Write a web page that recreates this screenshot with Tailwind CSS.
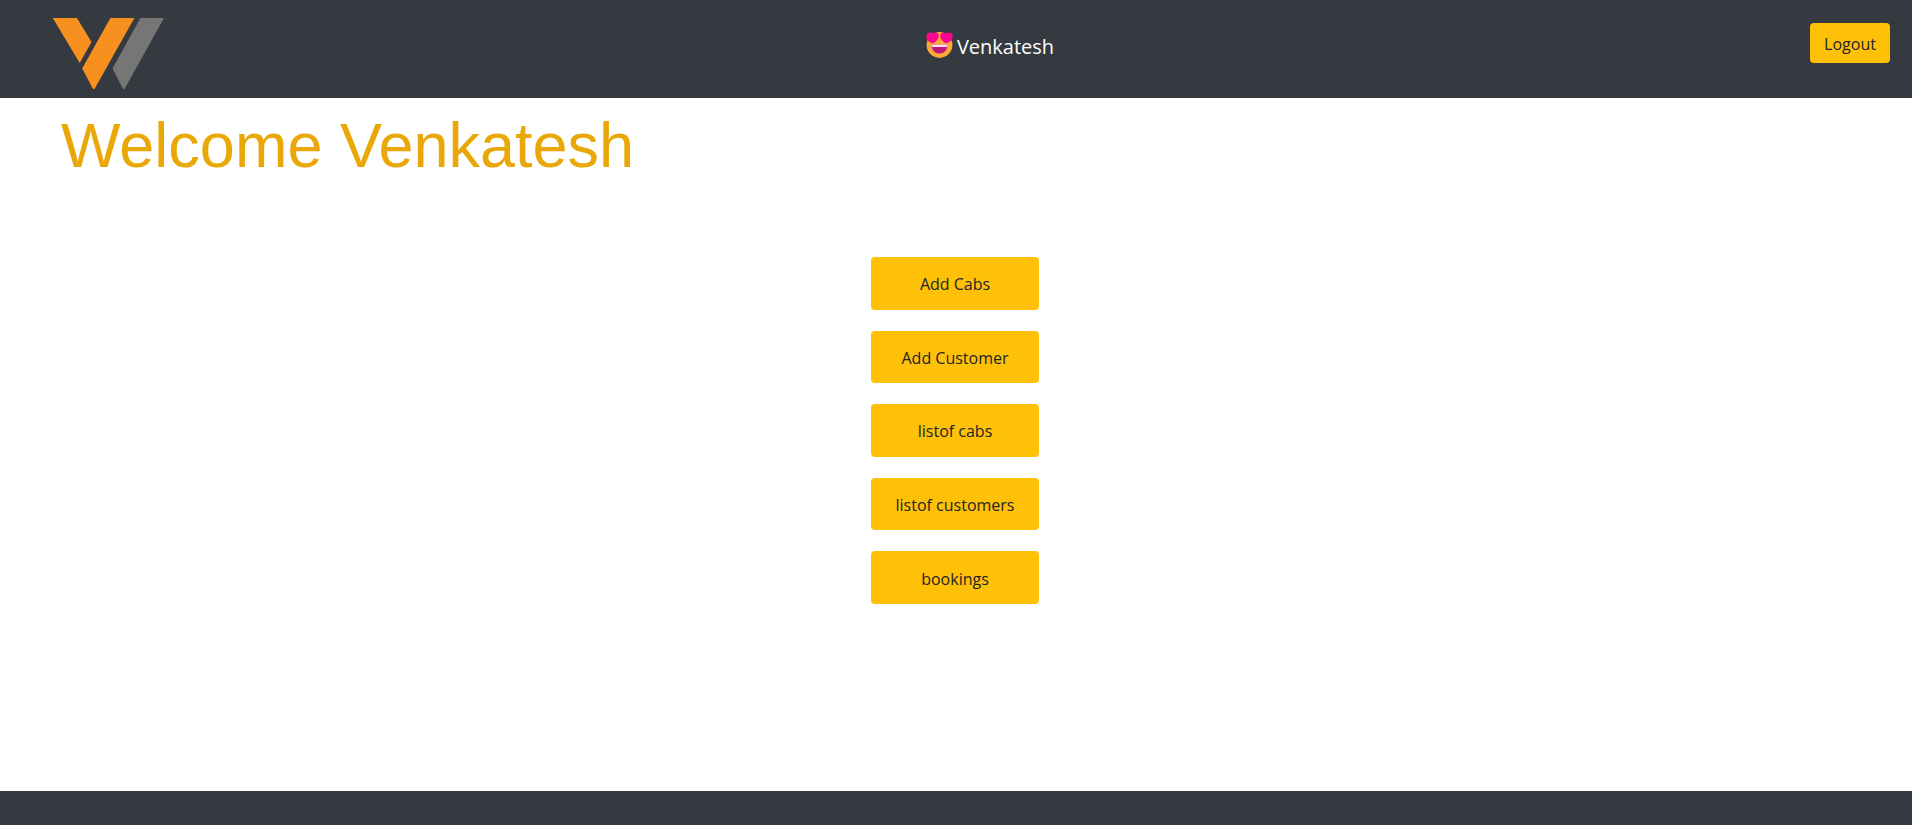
<!DOCTYPE html>
<html lang="en">
<head>
<meta charset="utf-8">
<title>Dashboard</title>
<script src="https://cdn.jsdelivr.net/npm/@tailwindcss/browser@4"></script>
</head>
<body class="flex min-h-screen flex-col bg-white pb-[2px] font-['Open_Sans','Noto_Sans',sans-serif] text-base text-[#212529]">
  <header class="grid h-[98px] grid-cols-[1fr_auto_1fr] items-start bg-[#343a40] pr-[22px] pl-[52px]">
    <a href="#" aria-label="Home" class="mt-[18px] w-[112px]">
      <svg class="block h-[72px] w-[112px]" viewBox="0 0 112 72">
        <path fill="#f7901e" d="M.8 0H25l14.500 24L27.700 45ZM58.400 0h24L42.500 71h-1.500L30.200 50.500Z"/>
        <path fill="#767676" d="M88.400 0h23.600L72.500 71h-1.500L60.500 50.500Z"/>
      </svg>
    </a>
    <div class="ml-[38px] flex items-start gap-1 text-[20px] leading-[30px] text-white">
      <svg class="mt-8 block h-[26px] w-[27px]" viewBox="0 0 27 26" aria-hidden="true">
        <circle cx="13.500" cy="13" r="12.900" fill="#fbab35"/>
        <path fill="#fd0590" d="M7.200 11.200C3.500 10.500.6 8.500.3 5 0 1.200 4-.8 7.200 1.500 10-.6 13 .9 12.800 4.200c-.2 3-2.600 5.500-5.600 7ZM19.800 11.200c3.700-.7 6.600-2.700 6.900-6.200.3-3.800-3.700-5.800-6.900-3.500-2.800-2.100-5.800-.6-5.600 2.700.2 3 2.600 5.500 5.600 7Z"/>
        <path fill="#bd1780" d="M5.500 12.500h16c0 6-3.500 9-8 9s-8-3-8-9Z"/>
        <path fill="#f4dfec" d="M5.500 12.500h16l-.5 2.500H6Z"/>
      </svg>
      <span class="mt-8">Venkatesh</span>
    </div>
    <button type="button" class="mt-[23px] h-10 w-20 justify-self-end rounded bg-[#ffc107] pt-[2px]">Logout</button>
  </header>
  <main class="flex-1">
    <h1 class="pt-[9px] pl-[61px] font-['Liberation_Sans',Arial,sans-serif] text-[63px] leading-[76px] text-[#e9a807]">Welcome Venkatesh</h1>
    <nav class="mt-[74px] flex justify-center pr-[2px]">
      <div class="grid h-[347px] w-[168px] auto-rows-fr gap-[21px]">
        <button type="button" class="rounded bg-[#ffc107] pt-[2px]">Add Cabs</button>
        <button type="button" class="rounded bg-[#ffc107] pt-[2px]">Add Customer</button>
        <button type="button" class="rounded bg-[#ffc107] pt-[2px]">listof cabs</button>
        <button type="button" class="rounded bg-[#ffc107] pt-[2px]">listof customers</button>
        <button type="button" class="rounded bg-[#ffc107] pt-[2px]">bookings</button>
      </div>
    </nav>
  </main>
  <footer class="h-[34px] bg-[#343a40]"></footer>
</body>
</html>
